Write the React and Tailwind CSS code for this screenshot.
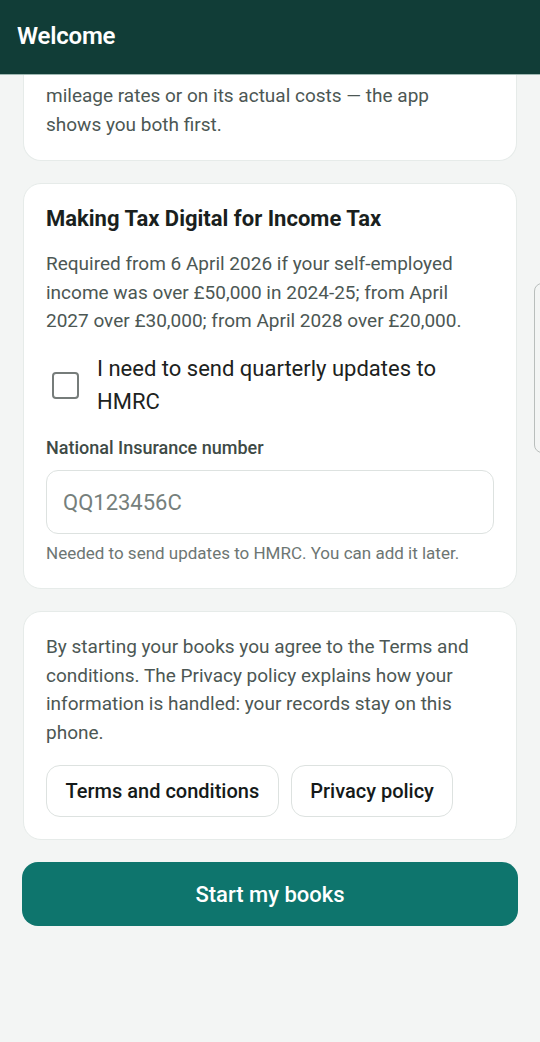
export default function App() {
  return (
    <div
      className="relative h-[1042px] w-[540px] overflow-hidden bg-[#f3f5f4]"
      style={{ fontFamily: "Roboto, 'Noto Sans', sans-serif" }}
    >
      <header className="flex h-[75px] items-center border-b border-[#9fb8b2] bg-[#113d37] px-[17px] pb-[3px]">
        <h1 className="text-[24px] font-semibold tracking-[-0.2px] text-white">Welcome</h1>
      </header>

      <main className="flex flex-col gap-[22px] px-[23px]">
        <section className="rounded-b-[18px] border border-t-0 border-[#e6ebe9] bg-white px-[22px] pb-[21px] pt-[6px]">
          <p className="pr-[40px] text-[19px] leading-[29px] text-[#4c5754]">
            mileage rates or on its actual costs — the app shows you both first.
          </p>
        </section>

        <section className="rounded-[18px] border border-[#e6ebe9] bg-white px-[22px] pb-[23px] pt-[20px]">
          <h2 className="text-[22px] font-bold leading-[30px] text-[#1a1f1e]">
            Making Tax Digital for Income Tax
          </h2>
          <p className="mt-[16px] text-[19px] leading-[28.7px] text-[#4c5754]">
            Required from 6 April 2026 if your self-employed income was over £50,000 in 2024-25; from April 2027 over £30,000; from April 2028 over £20,000.
          </p>
          <label className="mt-[16px] flex items-center">
            <span className="flex w-[51px] shrink-0 justify-start pl-[6px]">
              <span className="block h-[27px] w-[27px] rounded-[4px] border-2 border-[#767c7a] bg-white" />
            </span>
            <span className="text-[22px] leading-[33px] text-[#1c2220]">
              I need to send quarterly updates to HMRC
            </span>
          </label>
          <div className="mt-[18px] text-[18px] font-medium leading-[24px] text-[#3e4a46]">
            National Insurance number
          </div>
          <div className="mt-[10px] flex h-[64px] items-center rounded-[12px] border border-[#dde2e0] bg-white px-[16px]">
            <span className="text-[22px] text-[#767f7c]">QQ123456C</span>
          </div>
          <p className="mt-[7px] text-[17px] leading-[24px] text-[#6d7673]">
            Needed to send updates to HMRC. You can add it later.
          </p>
        </section>

        <section className="rounded-[18px] border border-[#e6ebe9] bg-white px-[22px] pb-[22px] pt-[21px]">
          <p className="text-[19px] leading-[28.5px] text-[#4c5754]">
            By starting your books you agree to the Terms and conditions. The Privacy policy explains how your information is handled: your records stay on this phone.
          </p>
          <div className="mt-[18px] flex gap-[12px]">
            <button className="h-[52px] rounded-[14px] border border-[#dde2e0] bg-white px-[18.5px] text-[20px] font-medium text-[#151a19]">
              Terms and conditions
            </button>
            <button className="h-[52px] rounded-[14px] border border-[#dde2e0] bg-white px-[18.5px] text-[20px] font-medium text-[#151a19]">
              Privacy policy
            </button>
          </div>
        </section>

        <button className="-mx-[1px] h-[64px] rounded-[16px] bg-[#0e756d] text-[22px] font-medium text-white">
          Start my books
        </button>
      </main>

      <div className="absolute left-[534px] top-[283px] h-[170px] w-[20px] rounded-[8px] border border-[#b9bebc] bg-[#f3f5f4]" />
    </div>
  );
}
